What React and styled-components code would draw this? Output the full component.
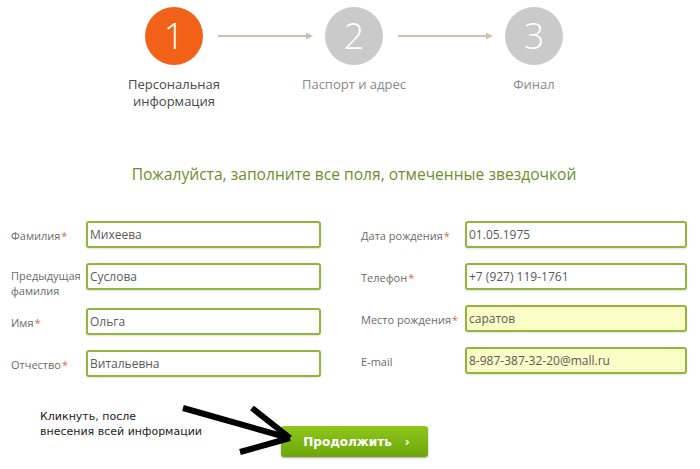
import React from "react";
import styled, { createGlobalStyle } from "styled-components";

const Global = createGlobalStyle`
  html, body { margin: 0; padding: 0; background: #fff; }
  body { font-family: "Open Sans", "Liberation Sans", sans-serif; }
`;

const Page = styled.div`
  width: 700px;
  height: 469px;
  position: relative;
  overflow: hidden;
  background: #fff;
`;

const StepsRow = styled.div`
  display: flex;
  align-items: center;
  padding: 7px 0 0 145px;
`;

const Circle = styled.div`
  width: 58px;
  height: 58px;
  border-radius: 50%;
  background: ${(p) => (p.$active ? "#f26118" : "#cacaca")};
  color: #fff;
  display: flex;
  align-items: center;
  justify-content: center;
  font-size: 36px;
  font-weight: 300;
  line-height: 1;
  flex: none;
`;

const Connector = styled.svg`
  width: 95px;
  height: 10px;
  margin: 0 ${(p) => p.$right}px 0 15px;
  flex: none;
`;

const StepLabels = styled.div`
  display: grid;
  grid-template-columns: repeat(3, 180px);
  padding-left: 84px;
  margin-top: 11px;
`;

const StepLabel = styled.div`
  text-align: center;
  font-size: 13px;
  line-height: 17px;
  color: ${(p) => (p.$active ? "#4a4a4a" : "#8a8a8a")};
`;

const Title = styled.h2`
  margin: 54px 0 0;
  text-align: center;
  font-size: 15.6px;
  line-height: 20px;
  font-weight: 400;
  color: #6f8d2e;
  padding-left: 8px;
`;

const Form = styled.div`
  display: flex;
  margin-top: 37px;
  padding-left: 11px;
  gap: 40px;
`;

const Column = styled.div`
  display: flex;
  flex-direction: column;
  gap: 15px;
  width: ${(p) => p.$w}px;
`;

const Row = styled.div`
  display: flex;
  align-items: flex-start;
`;

const Label = styled.div`
  width: ${(p) => p.$w}px;
  flex: none;
  font-size: 11px;
  color: #6b6b6b;
  white-space: nowrap;
  line-height: ${(p) => (p.$two ? "15px" : "16px")};
  margin: ${(p) => (p.$two ? "5px 0 -5px" : "7px 0 0")};
`;

const Star = styled.span`
  color: #e2673a;
  margin-left: 1px;
`;

const Input = styled.div`
  flex: 1;
  height: 27px;
  box-sizing: border-box;
  border: 2px solid #93b53d;
  border-radius: 3px;
  background: ${(p) => (p.$filled ? "#fafdc6" : "#fff")};
  box-shadow: 0 1px 2px rgba(0, 0, 0, 0.12);
  font-size: 12px;
  color: #5a5a5a;
  display: flex;
  align-items: center;
  padding-left: 2px;
`;

const Bottom = styled.div`
  position: relative;
  display: flex;
  align-items: flex-start;
  margin-top: 22px;
  padding-left: 40px;
`;

const Hint = styled.div`
  width: 241px;
  margin-top: 10px;
  font-family: "DejaVu Sans", Verdana, sans-serif;
  font-size: 11px;
  line-height: 15px;
  color: #222;
`;

const Button = styled.div`
  margin-top: 27px;
  width: 147px;
  height: 31px;
  box-sizing: border-box;
  border-radius: 3px;
  background: linear-gradient(#8fc61c, #6ea60b);
  box-shadow: 0 1px 2px rgba(0, 0, 0, 0.35);
  color: #fff;
  font-family: "DejaVu Sans", Verdana, sans-serif;
  font-weight: bold;
  font-size: 12px;
  display: flex;
  align-items: center;
  justify-content: center;
  gap: 13px;
  padding-left: 4px;
`;

const Pointer = styled.svg`
  position: absolute;
  left: 170px;
  top: 0;
  width: 130px;
  height: 60px;
  pointer-events: none;
`;

const Arrow = ({ right }) => (
  <Connector $right={right} viewBox="0 0 95 10">
    <line x1="0" y1="5" x2="92" y2="5" stroke="#c8c3b7" strokeWidth="2" />
    <path d="M88 1.5 L95 5 L88 8.5 Z" fill="#c8c3b7" />
  </Connector>
);

const left = [
  { label: "Фамилия", req: true, value: "Михеева" },
  { label: ["Предыдущая", "фамилия"], value: "Суслова" },
  { label: "Имя", req: true, value: "Ольга" },
  { label: "Отчество", req: true, value: "Витальевна" },
];

const right = [
  { label: "Дата рождения", req: true, value: "01.05.1975" },
  { label: "Телефон", req: true, value: "+7 (927) 119-1761" },
  { label: "Место рождения", req: true, value: "саратов", filled: true },
  { label: "E-mail", value: "8-987-387-32-20@mall.ru", filled: true },
];

const Field = ({ f, w }) => {
  const two = Array.isArray(f.label);
  return (
    <Row>
      <Label $w={w} $two={two}>
        {two ? (
          <>
            {f.label[0]}
            <br />
            {f.label[1]}
          </>
        ) : (
          f.label
        )}
        {f.req && <Star>*</Star>}
      </Label>
      <Input $filled={f.filled}>{f.value}</Input>
    </Row>
  );
};

export default function App() {
  return (
    <Page>
      <Global />
      <StepsRow>
        <Circle $active>1</Circle>
        <Arrow right={12} />
        <Circle>2</Circle>
        <Arrow right={12} />
        <Circle>3</Circle>
      </StepsRow>
      <StepLabels>
        <StepLabel $active>
          Персональная
          <br />
          информация
        </StepLabel>
        <StepLabel>Паспорт и адрес</StepLabel>
        <StepLabel>Финал</StepLabel>
      </StepLabels>
      <Title>Пожалуйста, заполните все поля, отмеченные звездочкой</Title>
      <Form>
        <Column $w={310}>
          {left.map((f, i) => (
            <Field key={i} f={f} w={75} />
          ))}
        </Column>
        <Column $w={326}>
          {right.map((f, i) => (
            <Field key={i} f={f} w={104} />
          ))}
        </Column>
      </Form>
      <Bottom>
        <Hint>
          Кликнуть, после
          <br />
          внесения всей информации
        </Hint>
        <Button>
          <span>Продолжить</span>
          <span>›</span>
        </Button>
        <Pointer viewBox="0 0 130 60">
          <g stroke="#000" strokeWidth="6" strokeLinecap="butt" fill="none">
            <line x1="13" y1="9" x2="119" y2="39" />
            <line x1="82" y1="9" x2="120" y2="39" />
            <line x1="70" y1="53" x2="120" y2="39" />
          </g>
        </Pointer>
      </Bottom>
    </Page>
  );
}
